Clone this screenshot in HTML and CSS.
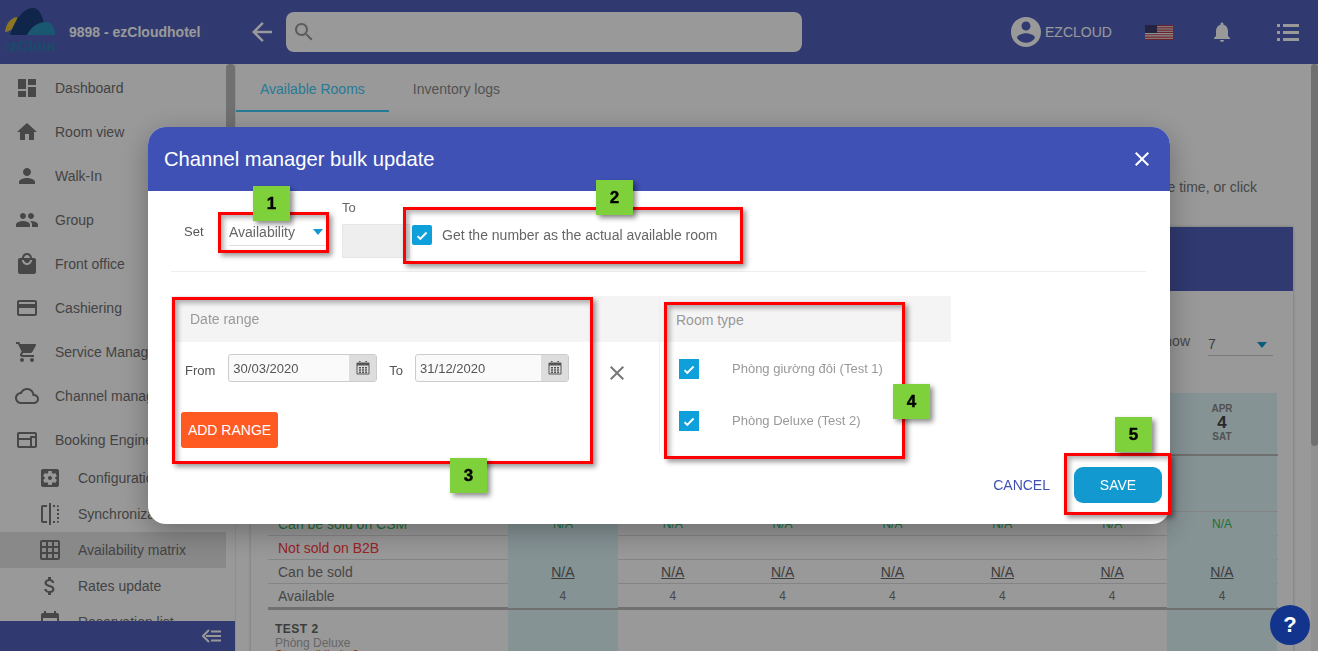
FILE: index.html
```html
<!DOCTYPE html>
<html lang="en">
<head>
    <meta charset="UTF-8">
    <title>Channel manager bulk update</title>
    <link rel="stylesheet" href="styles.css">
</head>
<body>
    <svg class="sprite" xmlns="http://www.w3.org/2000/svg">
        <symbol id="i-dashboard" viewBox="0 0 24 24"><path d="M3 13h8V3H3v10zm0 8h8v-6H3v6zm10 0h8V11h-8v10zm0-18v6h8V3h-8z"/></symbol>
        <symbol id="i-home" viewBox="0 0 24 24"><path d="M10 20v-6h4v6h5v-8h3L12 3 2 12h3v8z"/></symbol>
        <symbol id="i-person" viewBox="0 0 24 24"><path d="M12 12c2.21 0 4-1.79 4-4s-1.79-4-4-4-4 1.79-4 4 1.79 4 4 4zm0 2c-2.67 0-8 1.34-8 4v2h16v-2c0-2.66-5.33-4-8-4z"/></symbol>
        <symbol id="i-group" viewBox="0 0 24 24"><path d="M16 11c1.66 0 2.99-1.34 2.99-3S17.66 5 16 5c-1.66 0-3 1.34-3 3s1.34 3 3 3zm-8 0c1.66 0 2.99-1.34 2.99-3S9.66 5 8 5C6.34 5 5 6.34 5 8s1.34 3 3 3zm0 2c-2.33 0-7 1.17-7 3.5V19h14v-2.5c0-2.33-4.67-3.5-7-3.5zm8 0c-.29 0-.62.02-.97.05 1.16.84 1.97 1.97 1.97 3.45V19h6v-2.5c0-2.33-4.67-3.5-7-3.5z"/></symbol>
        <symbol id="i-mall" viewBox="0 0 24 24"><path d="M19 6h-2c0-2.76-2.24-5-5-5S7 3.24 7 6H5c-1.1 0-1.99.9-1.99 2L3 20c0 1.1.9 2 2 2h14c1.1 0 2-.9 2-2V8c0-1.1-.9-2-2-2zm-7-3c1.66 0 3 1.34 3 3H9c0-1.66 1.34-3 3-3zm0 10c-2.76 0-5-2.24-5-5h2c0 1.66 1.34 3 3 3s3-1.34 3-3h2c0 2.76-2.24 5-5 5z"/></symbol>
        <symbol id="i-card" viewBox="0 0 24 24"><path d="M20 4H4c-1.11 0-1.99.89-1.99 2L2 18c0 1.11.89 2 2 2h16c1.11 0 2-.89 2-2V6c0-1.11-.89-2-2-2zm0 14H4v-6h16v6zm0-10H4V6h16v2z"/></symbol>
        <symbol id="i-cart" viewBox="0 0 24 24"><path d="M7 18c-1.1 0-1.99.9-1.99 2S5.9 22 7 22s2-.9 2-2-.9-2-2-2zM1 2v2h2l3.6 7.59-1.35 2.45c-.16.28-.25.61-.25.96 0 1.1.9 2 2 2h12v-2H7.42c-.14 0-.25-.11-.25-.25l.03-.12.9-1.63h7.45c.75 0 1.41-.41 1.75-1.03l3.58-6.49c.08-.14.12-.31.12-.48 0-.55-.45-1-1-1H5.21l-.94-2H1zm16 16c-1.1 0-1.99.9-1.99 2s.89 2 1.99 2 2-.9 2-2-.9-2-2-2z"/></symbol>
        <symbol id="i-cloud" viewBox="0 0 24 24"><path d="M19.35 10.04C18.67 6.59 15.64 4 12 4 9.11 4 6.6 5.64 5.35 8.04 2.34 8.36 0 10.91 0 14c0 3.31 2.69 6 6 6h13c2.76 0 5-2.24 5-5 0-2.64-2.05-4.78-4.65-4.96zM19 18H6c-2.21 0-4-1.79-4-4s1.79-4 4-4h.71C7.37 7.69 9.48 6 12 6c3.04 0 5.5 2.46 5.5 5.5v.5H19c1.66 0 3 1.34 3 3s-1.34 3-3 3z"/></symbol>
        <symbol id="i-web" viewBox="0 0 24 24"><path d="M20 4H4c-1.11 0-1.99.89-1.99 2L2 18c0 1.11.89 2 2 2h16c1.11 0 2-.89 2-2V6c0-1.11-.89-2-2-2zM4 18v-6h11v6H4zm16 0h-3v-8h3v8zM15 10H4V6h16v2h-5v2z"/></symbol>
        <symbol id="i-settings" viewBox="0 0 24 24"><path d="M12 10c-1.1 0-2 .9-2 2s.9 2 2 2 2-.9 2-2-.9-2-2-2zm7-7H5c-1.11 0-2 .9-2 2v14c0 1.1.89 2 2 2h14c1.11 0 2-.9 2-2V5c0-1.1-.89-2-2-2zm-1.750 9c0 .23-.02.46-.05.68l1.48 1.16c.13.11.17.3.08.45l-1.4 2.42c-.09.15-.27.21-.43.15l-1.74-.7c-.36.28-.76.51-1.18.69l-.26 1.85c-.03.17-.18.3-.35.3h-2.8c-.17 0-.32-.13-.35-.29l-.26-1.85c-.43-.18-.82-.41-1.18-.69l-1.74.7c-.16.06-.34 0-.43-.15l-1.4-2.42c-.09-.15-.05-.34.08-.45l1.48-1.16c-.03-.23-.05-.46-.05-.69 0-.23.02-.46.05-.68l-1.48-1.16c-.13-.11-.17-.3-.08-.45l1.4-2.42c.09-.15.27-.21.43-.15l1.74.7c.36-.28.76-.51 1.18-.69l.26-1.85c.03-.17.18-.3.35-.3h2.8c.17 0 .32.13.35.29l.26 1.85c.43.18.82.41 1.18.69l1.74-.7c.16-.06.34 0 .43.15l1.4 2.42c.09.15.05.34-.08.45l-1.48 1.16c.03.23.05.46.05.69z"/></symbol>
        <symbol id="i-flip" viewBox="0 0 24 24"><path d="M15 21h2v-2h-2v2zm4-12h2V7h-2v2zM3 5v14c0 1.1.9 2 2 2h4v-2H5V5h4V3H5c-1.1 0-2 .9-2 2zm8 18h2V1h-2v22zm8-6h2v-2h-2v2zM15 5h2V3h-2v2zm4 8h2v-2h-2v2zm0 8c1.1 0 2-.9 2-2h-2v2zm0-16h2c0-1.1-.9-2-2-2v2z"/></symbol>
        <symbol id="i-grid" viewBox="0 0 24 24"><path d="M20 2H4c-1.1 0-2 .9-2 2v16c0 1.1.9 2 2 2h16c1.1 0 2-.9 2-2V4c0-1.1-.9-2-2-2zM8 20H4v-4h4v4zm0-6H4v-4h4v4zm0-6H4V4h4v4zm6 12h-4v-4h4v4zm0-6h-4v-4h4v4zm0-6h-4V4h4v4zm6 12h-4v-4h4v4zm0-6h-4v-4h4v4zm0-6h-4V4h4v4z"/></symbol>
        <symbol id="i-money" viewBox="0 0 24 24"><path d="M11.8 10.9c-2.27-.59-3-1.2-3-2.15 0-1.09 1.01-1.85 2.7-1.85 1.78 0 2.44.85 2.5 2.1h2.21c-.07-1.72-1.12-3.3-3.21-3.81V3h-3v2.16c-1.94.42-3.5 1.68-3.5 3.61 0 2.31 1.91 3.46 4.7 4.13 2.5.6 3 1.48 3 2.41 0 .69-.49 1.79-2.7 1.79-2.06 0-2.87-.92-2.98-2.1h-2.2c.12 2.19 1.76 3.42 3.68 3.83V21h3v-2.15c1.95-.37 3.5-1.5 3.5-3.55 0-2.84-2.43-3.81-4.7-4.4z"/></symbol>
        <symbol id="i-event" viewBox="0 0 24 24"><path d="M17 12h-5v5h5v-5zM16 1v2H8V1H6v2H5c-1.11 0-1.99.9-1.99 2L3 19c0 1.1.89 2 2 2h14c1.1 0 2-.9 2-2V5c0-1.1-.9-2-2-2h-1V1h-2zm3 18H5V8h14v11z"/></symbol>
        <symbol id="i-account" viewBox="0 0 24 24"><path d="M12 2C6.48 2 2 6.48 2 12s4.48 10 10 10 10-4.48 10-10S17.52 2 12 2zm0 3c1.66 0 3 1.34 3 3s-1.34 3-3 3-3-1.34-3-3 1.34-3 3-3zm0 14.2c-2.5 0-4.71-1.28-6-3.22.03-1.99 4-3.08 6-3.08 1.99 0 5.97 1.09 6 3.08-1.29 1.94-3.5 3.22-6 3.22z"/></symbol>
        <symbol id="i-bell" viewBox="0 0 24 24"><path d="M12 22c1.1 0 2-.9 2-2h-4c0 1.1.89 2 2 2zm6-6v-5c0-3.07-1.64-5.64-4.5-6.32V4c0-.83-.67-1.5-1.5-1.5s-1.5.67-1.5 1.5v.68C7.63 5.36 6 7.92 6 11v5l-2 2v1h16v-1l-2-2z"/></symbol>
        <symbol id="i-search" viewBox="0 0 24 24"><path d="M15.5 14h-.79l-.28-.27C15.41 12.59 16 11.11 16 9.5 16 5.91 13.09 3 9.5 3S3 5.91 3 9.5 5.91 16 9.5 16c1.61 0 3.09-.59 4.23-1.57l.27.28v.79l5 4.99L20.49 19l-4.99-5zm-6 0C7.01 14 5 11.99 5 9.5S7.01 5 9.5 5 14 7.01 14 9.5 11.99 14 9.5 14z"/></symbol>
        <symbol id="i-back" viewBox="0 0 24 24"><path d="M20 11H7.83l5.59-5.59L12 4l-8 8 8 8 1.41-1.41L7.83 13H20v-2z"/></symbol>
        <symbol id="i-close" viewBox="0 0 24 24"><path d="M19 6.41L17.59 5 12 10.59 6.41 5 5 6.41 10.59 12 5 17.59 6.41 19 12 13.41 17.59 19 19 17.59 13.41 12z"/></symbol>
        <symbol id="i-check" viewBox="0 0 24 24"><path d="M9 16.17L5.5 12.7l-2.300 2.300L9 20.800 21 8.800l-2.300-2.300z"/></symbol>
        <symbol id="i-calendar" viewBox="0 0 16 16"><path d="M4 1h1.500v2H4zM10.500 1H12v2h-1.500zM2.500 2.500h11A1 1 0 0 1 14.500 3.500v10a1 1 0 0 1-1 1h-11a1 1 0 0 1-1-1v-10a1 1 0 0 1 1-1zm0 3v8h11v-8z" fill-rule="evenodd"/><path d="M4 7h2v1.500H4zM7 7h2v1.500H7zM10 7h2v1.500h-2zM4 9.300h2v1.500H4zM7 9.300h2v1.500H7zM10 9.300h2v1.500h-2zM4 11.500h2V13H4zM7 11.500h2V13H7zM10 11.500h2V13h-2z"/></symbol>
    </svg>

    <div class="app">
        <header class="topbar">
            <div class="logo">
                <svg class="logo-mark" viewBox="0 0 50 28">
                    <path d="M0 24C1 15 6 10 12 9 12 17 8 23 0 24z" fill="#e8c53a"/>
                    <path d="M5 27C10 12 18 0 28 0 34 0 37 7 39 15 31 15 26 19 22 27z" fill="#1c3f7c"/>
                    <path d="M22 27C27 19 33 14 40 14 46 14 50 18 50 27z" fill="#2a93bb"/>
                </svg>
                <span class="logo-text">ezCloud</span>
            </div>
            <span class="hotel-name">9898 - ezCloudhotel</span>
            <svg class="back-icon"><use href="#i-back"/></svg>
            <div class="search">
                <svg class="search-icon"><use href="#i-search"/></svg>
            </div>
            <div class="top-right">
                <svg class="account-icon"><use href="#i-account"/></svg>
                <span class="account-name">EZCLOUD</span>
                <svg class="flag" viewBox="0 0 28 15">
                    <rect width="28" height="15" fill="#b23a48"/>
                    <path d="M0 1.700h28M0 4h28M0 6.300h28M0 8.600h28M0 10.900h28M0 13.200h28" stroke="#f0f0f0" stroke-width="1.100"/>
                    <rect width="12" height="8" fill="#3c3b6e"/>
                </svg>
                <svg class="bell-icon"><use href="#i-bell"/></svg>
                <div class="menu-icon">
                    <span></span><span></span><span></span>
                </div>
            </div>
        </header>

        <div class="body">
            <aside class="sidebar">
                <div class="side-scroll">
                    <nav class="side-list">
                        <a class="side-item"><svg><use href="#i-dashboard"/></svg>Dashboard</a>
                        <a class="side-item"><svg><use href="#i-home"/></svg>Room view</a>
                        <a class="side-item"><svg><use href="#i-person"/></svg>Walk-In</a>
                        <a class="side-item"><svg><use href="#i-group"/></svg>Group</a>
                        <a class="side-item"><svg><use href="#i-mall"/></svg>Front office</a>
                        <a class="side-item"><svg><use href="#i-card"/></svg>Cashiering</a>
                        <a class="side-item"><svg><use href="#i-cart"/></svg>Service Management</a>
                        <a class="side-item"><svg><use href="#i-cloud"/></svg>Channel manager</a>
                        <a class="side-item parent"><svg><use href="#i-web"/></svg>Booking Engine</a>
                        <a class="side-sub"><svg><use href="#i-settings"/></svg>Configuration</a>
                        <a class="side-sub"><svg><use href="#i-flip"/></svg>Synchronization</a>
                        <a class="side-sub selected"><svg><use href="#i-grid"/></svg>Availability matrix</a>
                        <a class="side-sub"><svg><use href="#i-money"/></svg>Rates update</a>
                        <a class="side-sub"><svg><use href="#i-event"/></svg>Reservation list</a>
                    </nav>
                    <div class="side-thumb"></div>
                </div>
                <div class="side-foot">
                    <svg viewBox="0 0 20 14"><path d="M7 1L1 7l6 6M4 7h15M9 2.500h10M9 11.500h10" fill="none" stroke="currentColor" stroke-width="2"/></svg>
                </div>
            </aside>

            <main class="content">
                <div class="tabs">
                    <a class="tab active">Available Rooms</a>
                    <a class="tab">Inventory logs</a>
                </div>
                <p class="intro">You can update the number of available rooms for many room types at the same time, or click</p>
                <section class="card">
                    <div class="card-head"></div>
                    <div class="show-row">
                        <span>Show</span>
                        <div class="show-select">7<i class="caret"></i></div>
                    </div>
                    <div class="matrix">
                        <div class="m-row m-head">
                            <div class="m-label"></div>
                            <div class="m-cell hl"></div><div class="m-cell"></div><div class="m-cell"></div><div class="m-cell"></div><div class="m-cell"></div><div class="m-cell"></div>
                            <div class="m-cell hl date"><small>APR</small><b>4</b><small>SAT</small></div>
                        </div>
                        <div class="m-row m-blank">
                            <div class="m-label"></div>
                            <div class="m-cell hl"></div><div class="m-cell"></div><div class="m-cell"></div><div class="m-cell"></div><div class="m-cell"></div><div class="m-cell"></div><div class="m-cell hl"></div>
                        </div>
                        <div class="m-row green">
                            <div class="m-label">Can be sold on CSM</div>
                            <div class="m-cell hl">N/A</div><div class="m-cell">N/A</div><div class="m-cell">N/A</div><div class="m-cell">N/A</div><div class="m-cell">N/A</div><div class="m-cell">N/A</div><div class="m-cell hl">N/A</div>
                        </div>
                        <div class="m-row red">
                            <div class="m-label">Not sold on B2B</div>
                            <div class="m-cell hl"></div><div class="m-cell"></div><div class="m-cell"></div><div class="m-cell"></div><div class="m-cell"></div><div class="m-cell"></div><div class="m-cell hl"></div>
                        </div>
                        <div class="m-row links">
                            <div class="m-label">Can be sold</div>
                            <div class="m-cell hl"><u>N/A</u></div><div class="m-cell"><u>N/A</u></div><div class="m-cell"><u>N/A</u></div><div class="m-cell"><u>N/A</u></div><div class="m-cell"><u>N/A</u></div><div class="m-cell"><u>N/A</u></div><div class="m-cell hl"><u>N/A</u></div>
                        </div>
                        <div class="m-row m-last">
                            <div class="m-label">Available</div>
                            <div class="m-cell hl num">4</div><div class="m-cell num">4</div><div class="m-cell num">4</div><div class="m-cell num">4</div><div class="m-cell num">4</div><div class="m-cell num">4</div><div class="m-cell hl num">4</div>
                        </div>
                        <div class="m-row m-room">
                            <div class="m-label room-label">
                                <b>TEST 2</b>
                                <span>Phòng Deluxe</span>
                                <em>Stop sell limit: 0</em>
                            </div>
                            <div class="m-cell hl"></div><div class="m-cell"></div><div class="m-cell"></div><div class="m-cell"></div><div class="m-cell"></div><div class="m-cell"></div><div class="m-cell hl"></div>
                        </div>
                    </div>
                </section>
            </main>
            <div class="page-scroll"><div class="page-thumb"></div></div>
        </div>
    </div>

    <div class="overlay">
        <div class="modal">
            <div class="modal-head">
                <h2>Channel manager bulk update</h2>
                <svg class="modal-close"><use href="#i-close"/></svg>
            </div>

            <div class="set-row">
                <label class="set-label">Set</label>
                <div class="set-select">Availability<i class="caret"></i></div>
                <div class="to-col">
                    <label>To</label>
                    <div class="to-input"></div>
                </div>
                <div class="actual">
                    <span class="check"><svg><use href="#i-check"/></svg></span>
                    <span>Get the number as the actual available room</span>
                </div>
            </div>
            <div class="rule"></div>

            <div class="panels">
                <div class="panel panel-date">
                    <div class="panel-head">Date range</div>
                    <div class="date-row">
                        <label class="from">From</label>
                        <div class="date-input"><span>30/03/2020</span><i><svg><use href="#i-calendar"/></svg></i></div>
                        <label>To</label>
                        <div class="date-input wide"><span>31/12/2020</span><i><svg><use href="#i-calendar"/></svg></i></div>
                        <svg class="date-remove"><use href="#i-close"/></svg>
                    </div>
                    <button class="add-range">ADD RANGE</button>
                </div>
                <div class="panel panel-room">
                    <div class="panel-head">Room type</div>
                    <div class="room-row">
                        <span class="check square"><svg><use href="#i-check"/></svg></span>
                        <span>Phòng giường đôi (Test 1)</span>
                    </div>
                    <div class="room-row">
                        <span class="check square"><svg><use href="#i-check"/></svg></span>
                        <span>Phòng Deluxe (Test 2)</span>
                    </div>
                </div>
            </div>

            <div class="modal-foot">
                <button class="btn-cancel">CANCEL</button>
                <button class="btn-save">SAVE</button>
            </div>

            <!-- tutorial markers drawn over the dialog -->
            <div class="mark mark-1"></div>
            <div class="mark mark-2"></div>
            <div class="mark mark-3"></div>
            <div class="mark mark-4"></div>
            <div class="mark mark-5"></div>
            <div class="step step-1">1</div>
            <div class="step step-2">2</div>
            <div class="step step-3">3</div>
            <div class="step step-4">4</div>
            <div class="step step-5">5</div>
        </div>
    </div>

    <button class="help">?</button>
</body>
</html>
```

FILE: styles.css
```css
* {
    box-sizing: border-box;
}

html, body {
    margin: 0;
    height: 100%;
    overflow: hidden;
}

body {
    font-family: "Liberation Sans", Arial, sans-serif;
    font-size: 14px;
    color: #777;
    background: #fff;
}

.sprite {
    display: none;
}

svg {
    fill: currentColor;
}

.app {
    height: 651px;
    display: flex;
    flex-direction: column;
}

/* top bar */
.topbar {
    height: 64px;
    flex: none;
    display: flex;
    align-items: center;
    background: #5061bb;
    color: #fff;
}

.logo {
    width: 50px;
    height: 46px;
    margin: -2px 14px 0 5px;
    flex: none;
    overflow: hidden;
}

.logo-mark {
    display: block;
    width: 50px;
    height: 28px;
}

.logo-text {
    display: block;
    margin: 2px 0 0 -3px;
    font-size: 15px;
    font-weight: bold;
    line-height: 15px;
    color: #2a7fae;
    white-space: nowrap;
}

.hotel-name {
    width: 177px;
    flex: none;
    font-size: 14px;
    font-weight: bold;
    margin-top: -1px;
}

.back-icon {
    width: 30px;
    height: 30px;
    flex: none;
    margin-right: 9px;
    margin-left: 1px;
}

.search {
    width: 516px;
    height: 40px;
    flex: none;
    display: flex;
    align-items: center;
    padding-left: 6px;
    background: #fff;
    border-radius: 8px;
    color: #999;
}

.search-icon {
    width: 24px;
    height: 24px;
}

.top-right {
    flex: 1;
    display: flex;
    align-items: center;
    padding-left: 206px;
}

.account-icon {
    width: 36px;
    height: 36px;
    flex: none;
}

.account-name {
    width: 101px;
    flex: none;
    padding-left: 1px;
}

.flag {
    width: 28px;
    height: 15px;
    flex: none;
}

.bell-icon {
    width: 24px;
    height: 24px;
    flex: none;
    margin-left: 37px;
}

.menu-icon {
    width: 22px;
    margin-left: 43px;
    flex: none;
    display: flex;
    flex-direction: column;
    gap: 4px;
}

.menu-icon span {
    display: block;
    height: 3px;
    background: linear-gradient(to right, #fff 3px, transparent 3px, transparent 6px, #fff 6px);
}

.body {
    flex: 1;
    min-height: 0;
    display: flex;
}

/* sidebar */
.sidebar {
    width: 235px;
    flex: none;
    display: flex;
    flex-direction: column;
    background: #fff;
}

.side-scroll {
    flex: 1;
    min-height: 0;
    display: flex;
    overflow: hidden;
}

.side-list {
    width: 226px;
    flex: none;
    padding-top: 2px;
}

.side-thumb {
    width: 9px;
    height: 300px;
    background: #bbb;
    border-radius: 4px;
}

.side-item, .side-sub {
    display: flex;
    align-items: center;
    white-space: nowrap;
    color: #707070;
}

.side-item {
    height: 44px;
    padding-left: 15px;
}

.side-item.parent {
    margin-bottom: -2px;
}

.side-item svg {
    width: 24px;
    height: 24px;
    margin-right: 16px;
    flex: none;
    fill: #777;
}

.side-sub {
    height: 36px;
    padding-left: 38px;
}

.side-sub svg {
    width: 24px;
    height: 24px;
    margin-right: 16px;
    flex: none;
    fill: #777;
}

.side-sub.selected {
    background: #e4e4e4;
}

.side-foot {
    height: 30px;
    flex: none;
    display: flex;
    align-items: center;
    justify-content: flex-end;
    padding-right: 13px;
    background: #5061bb;
    color: #fff;
}

.side-foot svg {
    width: 20px;
    height: 14px;
}

/* page behind the dialog */
.content {
    flex: 1;
    min-width: 0;
    overflow: hidden;
    border-left: 1px solid #eee;
}

.tabs {
    height: 48px;
    display: flex;
    align-items: center;
}

.tab {
    height: 48px;
    line-height: 50px;
    padding: 0 24px;
    color: #8a8a8a;
}

.tab.active {
    color: #42cdfb;
    border-bottom: 2px solid #42cdfb;
}

.intro {
    margin: 66px 54px 0 0;
    line-height: 18px;
    text-align: right;
    white-space: nowrap;
}

.card {
    margin: 31px 18px 0 15px;
    height: 500px;
    background: #fff;
    box-shadow: 0 0 3px rgba(0, 0, 0, 0.25);
}

.card-head {
    height: 64px;
    background: #5061bb;
}

.show-row {
    height: 102px;
    display: flex;
    justify-content: flex-end;
    padding: 38px 20px 0 0;
}

.show-row > span {
    line-height: 24px;
    margin-right: 18px;
}

.show-select {
    width: 65px;
    height: 27px;
    padding-top: 7px;
    position: relative;
    color: #666;
    border-bottom: 1px solid #ccc;
}

.caret {
    position: absolute;
    width: 0;
    height: 0;
    border-left: 5px solid transparent;
    border-right: 5px solid transparent;
    border-top: 6px solid #1199d0;
}

.show-select .caret {
    right: 6px;
    top: 13px;
}

.matrix {
    margin-left: 17px;
    width: 1010px;
}

.m-row {
    display: grid;
    grid-template-columns: 240px repeat(7, 109.85px);
    height: 24px;
    line-height: 24px;
    border-bottom: 1px solid #ddd;
    white-space: nowrap;
}

.m-head {
    height: 63px;
    border-bottom: 2px solid #bbb;
}

.m-blank {
    height: 56px;
}

.m-label {
    padding-left: 10px;
}

.m-cell {
    text-align: center;
    line-height: 24px;
}

.hl {
    background: #dff5f9;
}

.date {
    display: flex;
    flex-direction: column;
    padding-top: 10px;
    line-height: 1;
}

.date small {
    font-size: 10px;
    font-weight: bold;
    color: #888;
    line-height: 12px;
}

.date b {
    font-size: 17px;
    color: #444;
    line-height: 16px;
}

.green {
    color: #35b85a;
}

.green .m-cell {
    font-size: 12px;
}

.red {
    color: #ff3b3b;
}

.links u {
    color: #666;
}

.num {
    font-size: 12px;
}

.m-last {
    height: 26px;
    border-bottom: 3px solid #bbb;
}

.m-room {
    height: 70px;
    border-bottom: 0;
}

.room-label {
    padding: 12px 0 0 7px;
    font-size: 12px;
    line-height: 14px;
}

.room-label b, .room-label span, .room-label em {
    display: block;
}

.room-label b {
    letter-spacing: 0.5px;
    color: #666;
}

.room-label span {
    color: #aaa;
}

.room-label em {
    margin-top: -2px;
    font-style: normal;
    color: #ff5a21;
}

.page-scroll {
    width: 7px;
    flex: none;
    background: #f2f2f2;
}

.page-thumb {
    height: 382px;
    background: #bbb;
    border-radius: 4px;
}

/* dialog */
.overlay {
    position: fixed;
    inset: 0;
    display: flex;
    align-items: center;
    justify-content: center;
    background: rgba(0, 0, 0, 0.4);
}

.modal {
    width: 1022px;
    height: 397px;
    position: relative;
    background: #fff;
    border-radius: 18px;
    box-shadow: 0 8px 30px rgba(0, 0, 0, 0.3);
}

.modal-head {
    height: 64px;
    display: flex;
    align-items: center;
    justify-content: space-between;
    padding: 0 18px 0 16px;
    background: #3f51b5;
    color: #fff;
    border-radius: 18px 18px 0 0;
}

.modal-head h2 {
    margin: 0;
    font-size: 20.2px;
    font-weight: normal;
}

.modal-close {
    width: 24px;
    height: 24px;
    margin-right: -2px;
}

.set-row {
    height: 80px;
    display: flex;
    align-items: flex-start;
    padding-left: 36px;
    font-size: 13px;
}

.set-label {
    margin-top: 33px;
    line-height: 16px;
    width: 20px;
    color: #555;
}

.set-select {
    width: 96px;
    height: 25px;
    margin: 30px 0 0 25px;
    position: relative;
    font-size: 14px;
    line-height: 22px;
    color: #666;
    border-bottom: 1px solid #ddd;
}

.set-select .caret {
    right: 2px;
    top: 8px;
}

.to-col {
    width: 68px;
    margin: 9px 0 0 17px;
}

.to-col label {
    display: block;
    height: 24px;
    line-height: 16px;
    color: #666;
}

.to-input {
    height: 34px;
    background: #eee;
    border: 1px solid #e6e6e6;
}

.actual {
    display: flex;
    align-items: center;
    margin: 34px 0 0 2px;
    font-size: 14px;
    color: #666;
}

.actual .check {
    margin-right: 10px;
}

.check {
    width: 20px;
    height: 20px;
    flex: none;
    display: flex;
    align-items: center;
    justify-content: center;
    background: #0ea0da;
    border-radius: 2px;
    color: #fff;
}

.check.square {
    border-radius: 0;
}

.check svg {
    width: 14px;
    height: 14px;
}

.rule {
    height: 1px;
    margin: 0 24px 0 23px;
    background: #eee;
}

.panels {
    display: flex;
    height: 157px;
    margin: 24px 0 0 23px;
}

.panel {
    display: flex;
    flex-direction: column;
}

.panel-date {
    width: 488px;
}

.panel-room {
    width: 292px;
    border-left: 1px solid #eee;
}

.panel-head {
    height: 46px;
    line-height: 46px;
    padding-left: 19px;
    background: #f4f4f4;
    color: #999;
}

.panel-room .panel-head {
    padding-left: 16px;
    line-height: 48px;
}

.date-row {
    display: flex;
    align-items: flex-start;
    gap: 12px;
    padding: 12px 0 0 14px;
    font-size: 13px;
}

.date-row label {
    margin-top: 8px;
    line-height: 18px;
    color: #555;
}

.date-row .from {
    margin-right: 1px;
}

.date-input {
    width: 149px;
    height: 28px;
    display: flex;
    background: #fafafa;
    border: 1px solid #ccc;
    border-radius: 3px;
    color: #555;
    line-height: 27px;
}

.date-input.wide {
    width: 154px;
}

.date-input span {
    flex: 1;
    padding-left: 4px;
}

.date-input i {
    width: 27px;
    display: flex;
    align-items: center;
    justify-content: center;
    background: #ddd;
    color: #555;
}

.date-input svg {
    width: 16px;
    height: 16px;
}

.date-remove {
    width: 24px;
    height: 24px;
    margin: 7px 0 0 24px;
    color: #777;
}

.add-range {
    width: 97px;
    height: 36px;
    margin: 30px 0 0 10px;
    padding: 0;
    border: 0;
    border-radius: 3px;
    background: #ff5a21;
    color: #fff;
    font: 14px "Liberation Sans", Arial, sans-serif;
}

.date-row + .add-range {
    margin-top: 27px;
}

.room-row {
    height: 52px;
    display: flex;
    align-items: flex-start;
    gap: 33px;
    padding: 17px 0 0 19px;
    font-size: 13px;
    line-height: 20px;
    color: #999;
}

.modal-foot {
    display: flex;
    justify-content: flex-end;
    align-items: center;
    gap: 24px;
    margin-top: 14px;
    padding-right: 8px;
}

.btn-cancel {
    padding: 0;
    border: 0;
    background: none;
    color: #3f51b5;
    font: 14px "Liberation Sans", Arial, sans-serif;
}

.btn-save {
    width: 88px;
    height: 36px;
    border: 0;
    border-radius: 9px;
    background: #1199d0;
    color: #fff;
    font: 14px "Liberation Sans", Arial, sans-serif;
}

/* tutorial markers */
.mark {
    position: absolute;
    border: 3px solid #f00;
    box-shadow: 3px 3px 5px rgba(0, 0, 0, 0.4), inset 3px 3px 5px rgba(0, 0, 0, 0.3);
}

.mark-1 { left: 70px; top: 85px; width: 111px; height: 41px; }
.mark-2 { left: 255px; top: 80px; width: 340px; height: 57px; }
.mark-3 { left: 24px; top: 170px; width: 421px; height: 167px; }
.mark-4 { left: 516px; top: 175px; width: 241px; height: 157px; }
.mark-5 { left: 916px; top: 326px; width: 107px; height: 62px; }

.step {
    position: absolute;
    width: 37px;
    height: 35px;
    display: flex;
    align-items: center;
    justify-content: center;
    background: #7fd13b;
    color: #000;
    font-size: 17px;
    font-weight: bold;
    -webkit-text-stroke: 0.4px #000;
    box-shadow: 3px 3px 5px rgba(0, 0, 0, 0.45);
}

.step-1 { left: 105px; top: 59px; }
.step-2 { left: 448px; top: 53px; }
.step-3 { left: 302px; top: 331px; }
.step-4 { left: 745px; top: 257px; }
.step-5 { left: 967px; top: 290px; }

.help {
    position: fixed;
    right: 8px;
    bottom: 6px;
    width: 40px;
    height: 40px;
    padding: 0;
    border: 0;
    border-radius: 50%;
    background: #12348c;
    color: #fff;
    font: bold 22px "Liberation Sans", Arial, sans-serif;
}
```
